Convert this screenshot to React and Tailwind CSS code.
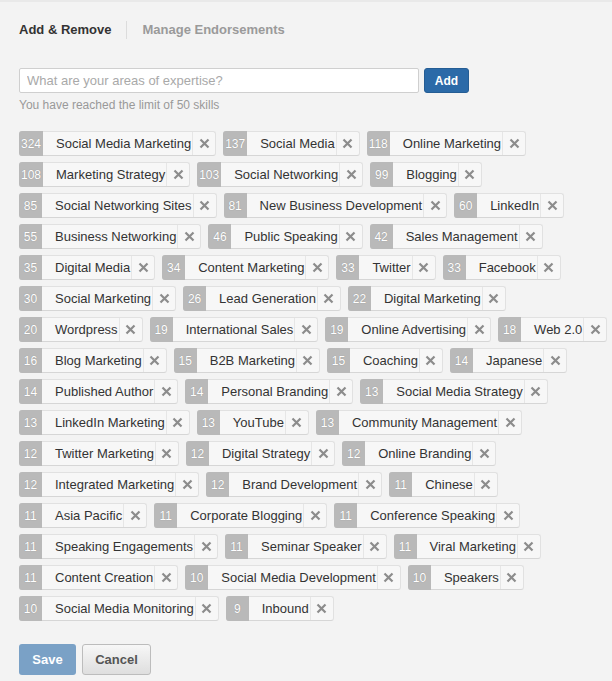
const rows = [
  [[324, "Social Media Marketing"], [137, "Social Media"], [118, "Online Marketing"]],
  [[108, "Marketing Strategy"], [103, "Social Networking"], [99, "Blogging"]],
  [[85, "Social Networking Sites"], [81, "New Business Development"], [60, "LinkedIn"]],
  [[55, "Business Networking"], [46, "Public Speaking"], [42, "Sales Management"]],
  [[35, "Digital Media"], [34, "Content Marketing"], [33, "Twitter"], [33, "Facebook"]],
  [[30, "Social Marketing"], [26, "Lead Generation"], [22, "Digital Marketing"]],
  [[20, "Wordpress"], [19, "International Sales"], [19, "Online Advertising"], [18, "Web 2.0"]],
  [[16, "Blog Marketing"], [15, "B2B Marketing"], [15, "Coaching"], [14, "Japanese"]],
  [[14, "Published Author"], [14, "Personal Branding"], [13, "Social Media Strategy"]],
  [[13, "LinkedIn Marketing"], [13, "YouTube"], [13, "Community Management"]],
  [[12, "Twitter Marketing"], [12, "Digital Strategy"], [12, "Online Branding"]],
  [[12, "Integrated Marketing"], [12, "Brand Development"], [11, "Chinese"]],
  [[11, "Asia Pacific"], [11, "Corporate Blogging"], [11, "Conference Speaking"]],
  [[11, "Speaking Engagements"], [11, "Seminar Speaker"], [11, "Viral Marketing"]],
  [[11, "Content Creation"], [10, "Social Media Development"], [10, "Speakers"]],
  [[10, "Social Media Monitoring"], [9, "Inbound"]],
];

const CloseIcon = () => (
  <svg width="11" height="11" viewBox="0 0 11 11" className="text-[#8c8c8c]">
    <path d="M1.5 1.5 L9.5 9.5 M9.5 1.5 L1.5 9.5" stroke="currentColor" strokeWidth="2.2" strokeLinecap="butt" />
  </svg>
);

const SkillTag = ({ count, name }) => (
  <div className="flex h-[25px] shrink-0 items-stretch whitespace-nowrap rounded-[3px] border border-[#e1e1e1] border-b-[#d6d6d6] bg-[#f7f7f7]">
    {/* count */}
    <span className="-my-px -ml-px flex min-w-[23px] items-center justify-center rounded-l-[3px] bg-[#b9b9b9] px-[2px] text-[12px] text-white [text-shadow:0_0_1px_rgba(0,0,0,0.25)]">
      {count}
    </span>
    <span className="flex items-center pl-[13px] pr-[1px] text-[13px] text-[#333]">{name}</span>
    <span className="flex w-[23px] items-center justify-center border-l border-[#e6e6e6]">
      <CloseIcon />
    </span>
  </div>
);

export default function App() {
  return (
    <div className="min-h-[681px] border-t-2 border-[#e9e9e9] bg-[#f3f3f3] pl-[19px] pt-[19px] font-['Liberation_Sans',Arial,sans-serif]">
      {/* Tabs */}
      <div className="flex h-[18px] items-center text-[13px] font-bold">
        <span className="text-[#333]">Add &amp; Remove</span>
        <span className="mx-[15px] h-[18px] w-px bg-[#dcdcdc]" />
        <span className="text-[#9a9a9a]">Manage Endorsements</span>
      </div>

      {/* Add skill */}
      <div className="mt-[29px] flex gap-[5px]">
        <input
          placeholder="What are your areas of expertise?"
          className="h-[25px] w-[400px] rounded-[2px] border border-[#cfcfcf] bg-white px-[7px] text-[13px] text-[#333] placeholder:text-[#a9a9a9] outline-none"
        />
        <button className="h-[25px] w-[45px] rounded-[3px] border border-[#255d94] bg-[#2b6aa8] text-[12px] font-bold text-white">
          Add
        </button>
      </div>
      <p className="mt-[5px] text-[12px] leading-[14px] text-[#999]">You have reached the limit of 50 skills</p>

      {/* Skills */}
      <div className="mt-[19px] flex flex-col gap-[6px]">
        {rows.map((row, i) => (
          <div key={i} className="flex gap-[7px]">
            {row.map(([count, name]) => (
              <SkillTag key={name} count={count} name={name} />
            ))}
          </div>
        ))}
      </div>

      {/* Actions */}
      <div className="mt-[23px] flex gap-[6px] pb-[6px]">
        <button className="h-[31px] w-[57px] rounded-[3px] bg-[#7aa1c6] text-[13px] font-bold text-white">Save</button>
        <button className="h-[31px] w-[69px] rounded-[3px] border border-[#bcbcbc] bg-linear-to-b from-[#f7f7f7] to-[#dedede] text-[13px] font-bold text-[#555]">
          Cancel
        </button>
      </div>
    </div>
  );
}
